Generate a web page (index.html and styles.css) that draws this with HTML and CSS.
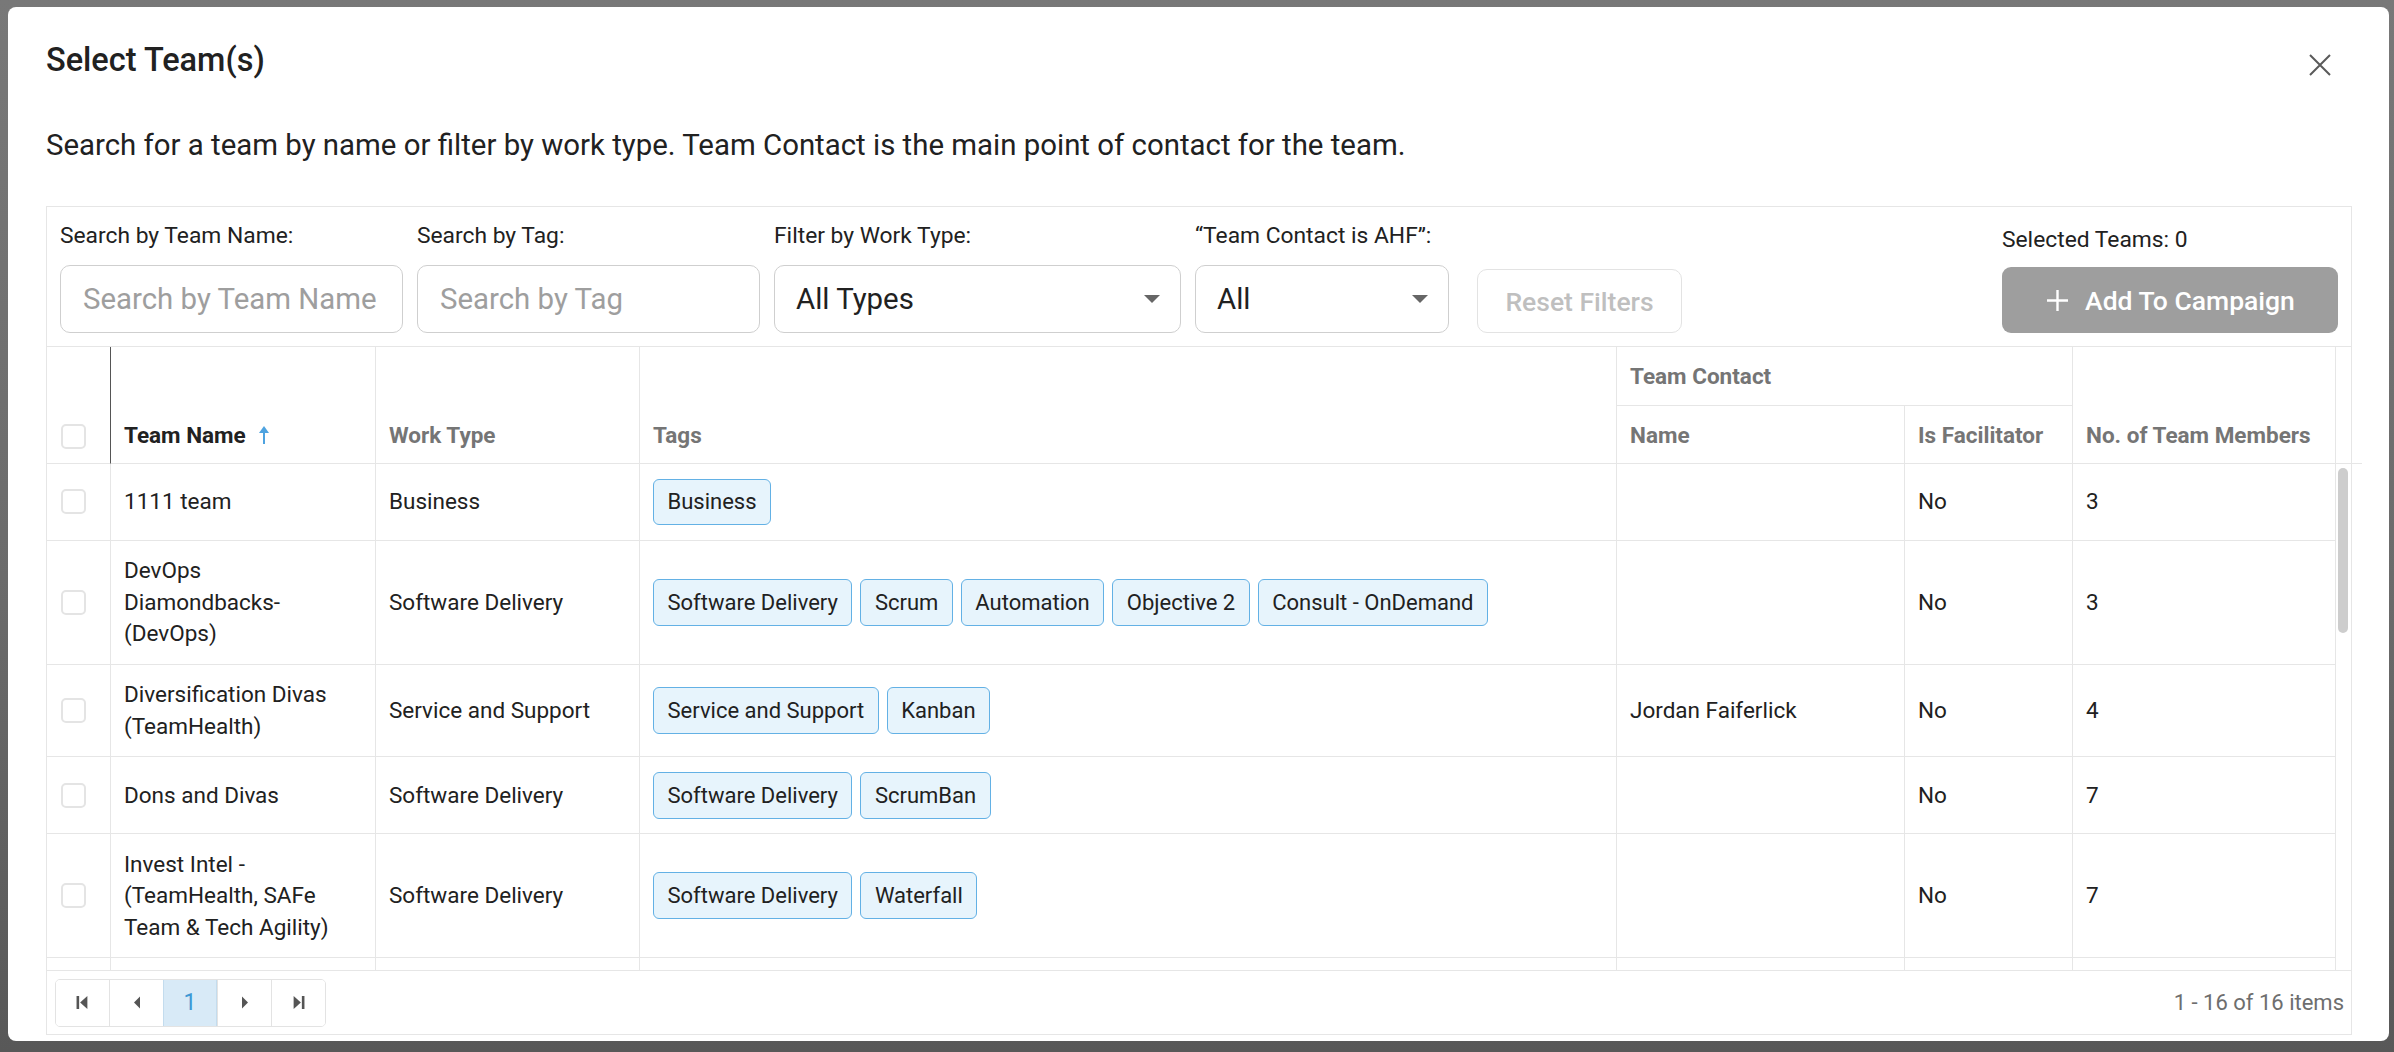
FILE: index.html
```html
<!DOCTYPE html>
<html lang="en">
<head>
<meta charset="utf-8">
<title>Select Team(s)</title>
<link rel="stylesheet" href="styles.css">
</head>
<body>
<div class="modal" role="dialog" aria-labelledby="dlg-title">
  <div class="modal-head">
    <h1 class="modal-title" id="dlg-title">Select Team(s)</h1>
    <button class="close-btn" aria-label="Close">
      <svg width="24" height="22" viewBox="0 0 24 22"><path d="M2 1L22 21M22 1L2 21" stroke="#5a5a5a" stroke-width="2" fill="none"/></svg>
    </button>
  </div>
  <p class="modal-desc">Search for a team by name or filter by work type. Team Contact is the main point of contact for the team.</p>

  <div class="panel">
    <div class="filters">
      <div class="field">
        <label class="field-label">Search by Team Name:</label>
        <input class="text-input w-name" type="text" placeholder="Search by Team Name">
      </div>
      <div class="field">
        <label class="field-label">Search by Tag:</label>
        <input class="text-input w-tag" type="text" placeholder="Search by Tag">
      </div>
      <div class="field">
        <label class="field-label">Filter by Work Type:</label>
        <div class="select w-type"><span>All Types</span><span class="caret"></span></div>
      </div>
      <div class="field">
        <label class="field-label">“Team Contact is AHF”:</label>
        <div class="select w-ahf"><span>All</span><span class="caret"></span></div>
      </div>
      <button class="reset-btn">Reset Filters</button>
      <div class="field right-group">
        <div class="selected-count">Selected Teams: 0</div>
        <button class="add-btn">
          <svg width="25" height="25" viewBox="0 0 25 25"><path d="M12.5 2v21M2 12.5h21" stroke="#fff" stroke-width="2.4" fill="none"/></svg>
          <span>Add To Campaign</span>
        </button>
      </div>
    </div>

    <div class="grid-head">
      <div class="th th-span th-cb"><span class="checkbox"></span></div>
      <div class="th th-span th-sorted"><span class="th-text">Team Name</span>
        <svg class="sort-icon" width="12" height="18" viewBox="0 0 12 18"><path d="M6 18V5" stroke="#4ea3e0" stroke-width="2"/><path d="M1 7L6 0L11 7Z" fill="#4ea3e0"/></svg>
      </div>
      <div class="th th-span"><span class="th-text">Work Type</span></div>
      <div class="th th-span"><span class="th-text">Tags</span></div>
      <div class="th th-group">Team Contact</div>
      <div class="th th-span th-members"><span class="th-text">No. of Team Members</span></div>
      <div class="th th-span th-gutter"></div>
      <div class="th th-sub th-name">Name</div>
      <div class="th th-sub th-fac">Is Facilitator</div>
    </div>

    <div class="grid-body">
      <div class="rows">
        <div class="row">
          <div class="td td-cb"><span class="checkbox"></span></div>
          <div class="td td-team">1111 team</div>
          <div class="td">Business</div>
          <div class="td"><div class="tags"><span class="tag">Business</span></div></div>
          <div class="td"></div>
          <div class="td">No</div>
          <div class="td">3</div>
        </div>
        <div class="row">
          <div class="td td-cb"><span class="checkbox"></span></div>
          <div class="td td-team">DevOps Diamondbacks- (DevOps)</div>
          <div class="td">Software Delivery</div>
          <div class="td"><div class="tags"><span class="tag">Software Delivery</span><span class="tag">Scrum</span><span class="tag">Automation</span><span class="tag">Objective 2</span><span class="tag">Consult - OnDemand</span></div></div>
          <div class="td"></div>
          <div class="td">No</div>
          <div class="td">3</div>
        </div>
        <div class="row">
          <div class="td td-cb"><span class="checkbox"></span></div>
          <div class="td td-team">Diversification Divas (TeamHealth)</div>
          <div class="td">Service and Support</div>
          <div class="td"><div class="tags"><span class="tag">Service and Support</span><span class="tag">Kanban</span></div></div>
          <div class="td">Jordan Faiferlick</div>
          <div class="td">No</div>
          <div class="td">4</div>
        </div>
        <div class="row">
          <div class="td td-cb"><span class="checkbox"></span></div>
          <div class="td td-team">Dons and Divas</div>
          <div class="td">Software Delivery</div>
          <div class="td"><div class="tags"><span class="tag">Software Delivery</span><span class="tag">ScrumBan</span></div></div>
          <div class="td"></div>
          <div class="td">No</div>
          <div class="td">7</div>
        </div>
        <div class="row">
          <div class="td td-cb"><span class="checkbox"></span></div>
          <div class="td td-team">Invest Intel - (TeamHealth, SAFe Team &amp; Tech Agility)</div>
          <div class="td">Software Delivery</div>
          <div class="td"><div class="tags"><span class="tag">Software Delivery</span><span class="tag">Waterfall</span></div></div>
          <div class="td"></div>
          <div class="td">No</div>
          <div class="td">7</div>
        </div>
        <div class="row row-empty">
          <div class="td"></div><div class="td"></div><div class="td"></div><div class="td"></div><div class="td"></div><div class="td"></div><div class="td"></div>
        </div>
      </div>
      <div class="scroll-gutter"><div class="scroll-thumb"></div></div>
    </div>

    <div class="pager">
      <div class="pager-nav">
        <span class="pg-btn" aria-label="First page"><svg width="13" height="13" viewBox="0 0 12 12"><rect x="0.5" y="0" width="2.4" height="12" fill="#555"/><path d="M10.5 0L3.8 6L10.5 12Z" fill="#555"/></svg></span>
        <span class="pg-btn" aria-label="Previous page"><svg width="8" height="13" viewBox="0 0 8 12"><path d="M7 0L1 6L7 12Z" fill="#555"/></svg></span>
        <span class="pg-btn active">1</span>
        <span class="pg-btn" aria-label="Next page"><svg width="8" height="13" viewBox="0 0 8 12"><path d="M1 0L7 6L1 12Z" fill="#555"/></svg></span>
        <span class="pg-btn" aria-label="Last page"><svg width="13" height="13" viewBox="0 0 12 12"><path d="M1.5 0L8.2 6L1.5 12Z" fill="#555"/><rect x="9.1" y="0" width="2.4" height="12" fill="#555"/></svg></span>
      </div>
      <div class="pager-info">1 - 16 of 16 items</div>
    </div>
  </div>
</div>
</body>
</html>
```
FILE: styles.css
```css
* { box-sizing: border-box; }

html, body {
  margin: 0;
  height: 100%;
}

body {
  font-family: Roboto, "Liberation Sans", sans-serif;
  color: #212121;
  background: linear-gradient(#787878 0%, #6b6b6b 55%, #585858 100%);
  overflow: hidden;
}

.modal {
  margin: 7px 5px 11px 8px;
  height: 1034px;
  background: #fff;
  border-radius: 8px;
  display: flex;
  flex-direction: column;
  padding: 35px 37px 6px 38px;
}

.modal-head {
  display: flex;
  justify-content: space-between;
  align-items: flex-start;
}

.modal-title {
  margin: 0;
  font-size: 32.5px;
  font-weight: 500;
  line-height: 36px;
  color: #212121;
}

.close-btn {
  margin: 12px 20px 0 0;
  padding: 0;
  border: 0;
  background: none;
  width: 24px;
  height: 22px;
  display: block;
}

.modal-desc {
  margin: 50px 0 0;
  font-size: 29.4px;
  line-height: 34px;
  color: #212121;
}

.panel {
  margin-top: 44px;
  flex: 1;
  min-height: 0;
  border: 1px solid #e6e6e6;
  display: flex;
  flex-direction: column;
}

/* filters */
.filters {
  display: flex;
  align-items: flex-end;
  gap: 14px;
  padding: 16px 13px 13px;
  border-bottom: 1px solid #e6e6e6;
}

.field {
  display: flex;
  flex-direction: column;
}

.field-label {
  font-size: 22.8px;
  line-height: 26px;
  color: #212121;
  margin-bottom: 16px;
}

.text-input {
  height: 68px;
  border: 1px solid #cfcfcf;
  border-radius: 10px;
  padding: 0 22px;
  font-family: Roboto, "Liberation Sans", sans-serif;
  font-size: 29.4px;
  color: #212121;
  outline: none;
  background: #fff;
}

.text-input::placeholder { color: #9e9e9e; }

.w-name, .w-tag { width: 343px; }
.w-type { width: 407px; }
.w-ahf { width: 254px; }

.select {
  height: 68px;
  border: 1px solid #cfcfcf;
  border-radius: 10px;
  padding: 0 20px 0 21px;
  display: flex;
  align-items: center;
  justify-content: space-between;
  font-size: 29.4px;
  color: #212121;
}

.caret {
  width: 0;
  height: 0;
  border-left: 8px solid transparent;
  border-right: 8px solid transparent;
  border-top: 8px solid #666;
}

.reset-btn {
  margin-left: 14px;
  width: 205px;
  height: 64px;
  border: 1px solid #e3e3e3;
  border-radius: 10px;
  background: #fff;
  color: #bfbfbf;
  font-family: Roboto, "Liberation Sans", sans-serif;
  font-size: 26.5px;
  font-weight: 500;
  padding: 0;
}

.right-group { margin-left: auto; }

.selected-count {
  font-size: 22.8px;
  line-height: 26px;
  color: #212121;
  margin-bottom: 14px;
}

.add-btn {
  width: 336px;
  height: 66px;
  border: 0;
  border-radius: 9px;
  background: #9e9e9e;
  color: #fff;
  font-family: Roboto, "Liberation Sans", sans-serif;
  font-size: 26.5px;
  font-weight: 500;
  display: flex;
  align-items: center;
  justify-content: center;
  gap: 15px;
  padding: 0;
}

/* grid header */
.grid-head {
  display: grid;
  grid-template-columns: 64px 265px 264px 977px 288px 168px 263px 15px;
  grid-template-rows: 59px 58px;
}

.th {
  border-right: 1px solid #e6e6e6;
  border-bottom: 1px solid #e6e6e6;
  padding: 0 13px;
  display: flex;
  align-items: center;
  font-size: 22.5px;
  line-height: 26px;
  font-weight: 700;
  color: #757575;
}

.th-span {
  grid-row: 1 / 3;
  align-items: flex-end;
  padding-bottom: 15px;
}

.th-cb {
  padding-left: 14px;
  padding-bottom: 14px;
  border-right-color: #555;
}

.th-sorted { color: #212121; }

.sort-icon {
  margin-left: 12px;
  margin-bottom: 4px;
}

.th-group { grid-column: 5 / 7; grid-row: 1; }
.th-members { grid-column: 7; }
.th-gutter { grid-column: 8; border-right: 0; }
.th-name { grid-column: 5; grid-row: 2; }
.th-fac { grid-column: 6; grid-row: 2; }

.checkbox {
  display: block;
  width: 25px;
  height: 25px;
  border: 2px solid #e4e4e4;
  border-radius: 5px;
  background: #fff;
}

/* grid body */
.grid-body {
  flex: 1;
  min-height: 0;
  display: flex;
  overflow: hidden;
}

.rows { width: 2289px; }

.row {
  display: grid;
  grid-template-columns: 64px 265px 264px 977px 288px 168px 263px;
}

.row-empty .td { height: 77px; }

.td {
  border-right: 1px solid #e6e6e6;
  border-bottom: 1px solid #e6e6e6;
  padding: 14.5px 13px;
  display: flex;
  align-items: center;
  font-size: 22.5px;
  line-height: 31.3px;
  color: #212121;
}

.td-team { padding-right: 20px; }
.td-cb { padding-left: 14px; }

.tags {
  display: flex;
  flex-wrap: wrap;
  gap: 8px;
}

.tag {
  border: 1px solid #63b1e5;
  background: #e7f4fc;
  border-radius: 6px;
  padding: 6.85px 13.5px;
  font-size: 22px;
  line-height: 31.3px;
  white-space: nowrap;
}

.scroll-gutter {
  width: 15px;
  padding: 4px 2px 0 2px;
}

.scroll-thumb {
  width: 10px;
  height: 165px;
  border-radius: 5px;
  background: #cdcdcd;
}

/* pager */
.pager {
  height: 64px;
  border-top: 1px solid #e6e6e6;
  display: flex;
  align-items: center;
  justify-content: space-between;
  padding: 0 7px 0 8px;
}

.pager-nav {
  display: flex;
  height: 48px;
  border: 1px solid #e3e3e3;
  border-radius: 5px;
  overflow: hidden;
}

.pg-btn {
  width: 54px;
  display: flex;
  align-items: center;
  justify-content: center;
  border-left: 1px solid #e3e3e3;
  background: #fff;
  font-size: 23px;
}

.pg-btn:first-child { border-left: 0; width: 53px; }

.pg-btn.active {
  background: #d8eaf7;
  color: #3e98d4;
  border-left-color: #c3dcee;
  border-right: 1px solid #c3dcee;
}

.pager-info {
  font-size: 22px;
  color: #6e6e6e;
}
```
